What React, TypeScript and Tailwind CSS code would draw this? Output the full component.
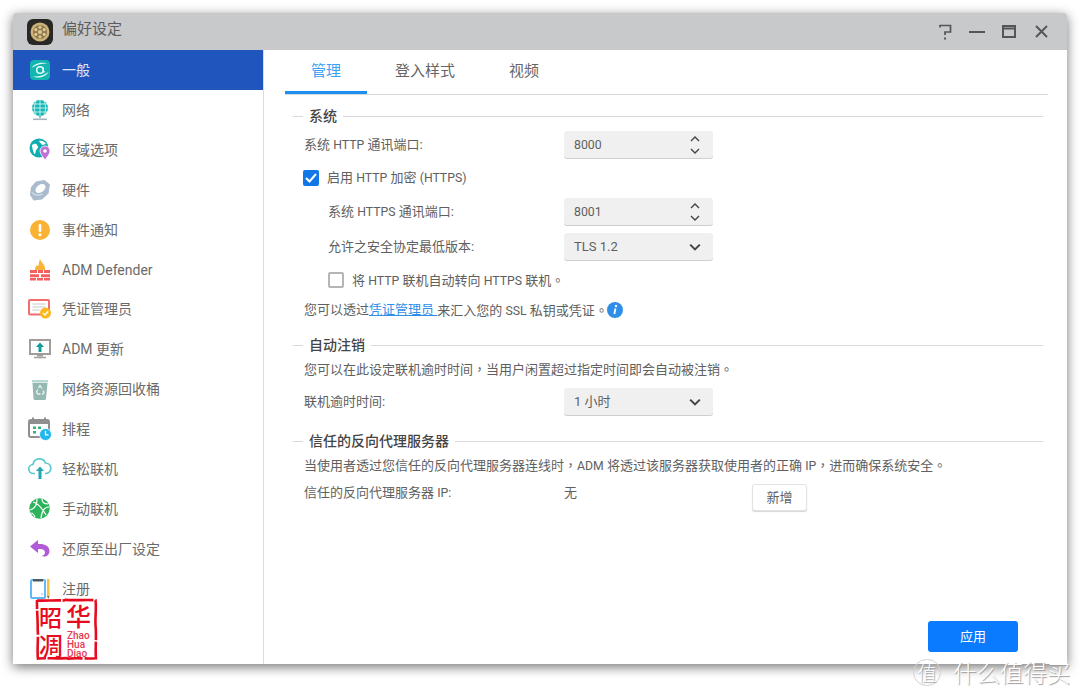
import { ReactNode } from "react";

const AppIcon = () => (
  <svg width="26" height="26" viewBox="0 0 26 26">
    <rect width="26" height="26" rx="6" fill="#2a2824" />
    <circle cx="13" cy="13" r="9.500" fill="#cdb27a" />
    <circle cx="13" cy="13" r="7" fill="#8d7850" />
    <circle cx="13" cy="13" r="2" fill="#e2c98f" />
    {[0, 60, 120, 180, 240, 300].map((a) => (
      <circle key={a} cx="13" cy="8.200" r="1.600" fill="#e2c98f" transform={`rotate(${a} 13 13)`} />
    ))}
  </svg>
);

const GeneralIcon = () => (
  <svg width="22" height="22" viewBox="0 0 22 22">
    <rect x="1" y="1" width="20" height="20" rx="4" fill="#12b5b0" />
    <path d="M2.500 9 C6 3.500 14 3 18.500 4.500 C13 4.300 7.500 5.500 2.500 9Z M19.500 13 C16 19 8 19.500 4 17.500 C9 18 15 16.500 19.500 13Z" fill="#e8fbfa" />
    <circle cx="11" cy="11" r="3.300" fill="none" stroke="#e8fbfa" strokeWidth="1.500" />
    <path d="M14.300 8.500v3.500c0 1 1 1 1.500.5" fill="none" stroke="#e8fbfa" strokeWidth="1.300" />
  </svg>
);

const NetworkIcon = () => (
  <svg width="22" height="22" viewBox="0 0 22 22">
    <circle cx="11" cy="9" r="8" fill="#14b8b4" />
    <path d="M3 9h16M4 5h14M4 13h14M11 1v16M7 2c-2 4-2 10 0 14M15 2c2 4 2 10 0 14" fill="none" stroke="#e6f8f7" strokeWidth="0.800" />
    <path d="M11 17v2" stroke="#9fb3bd" strokeWidth="2" />
    <path d="M4 20.300h14" stroke="#9fb3bd" strokeWidth="1.600" />
  </svg>
);

const RegionIcon = () => (
  <svg width="22" height="23" viewBox="0 0 22 23">
    <circle cx="10" cy="10" r="9.500" fill="#12adb0" />
    <path d="M3 7c2-1 4-2 5 0s2 2 0 4-1 4-2 5-3-6-3-9Z M10 3c3-1 6 1 7 3l-4 1c-1-2-2-2-3-4Z" fill="#fff" />
    <path d="M16 8a5 5 0 0 1 5 5c0 3-3 6-5 9-2-3-5-6-5-9a5 5 0 0 1 5-5Z" fill="#c26fd6" stroke="#fff" strokeWidth="0.800" />
    <circle cx="16" cy="13" r="1.800" fill="#fff" />
  </svg>
);

const HardwareIcon = () => (
  <svg width="22" height="22" viewBox="0 0 22 22">
    <path d="M7 2.500 15.500 1 21 5.500l-1.500 9-6.500 6-8.500 1L1 16l1-8Z" fill="#a9bbcd" />
    <ellipse cx="11.500" cy="9.500" rx="5.600" ry="3.700" transform="rotate(-35 11.500 9.500)" fill="#fff" />
    <path d="M3 13.500c2 3 7 3.500 10.500 1.500" fill="none" stroke="#d7dfe8" strokeWidth="1.300" />
  </svg>
);

const AlertIcon = () => (
  <svg width="20" height="20" viewBox="0 0 20 20">
    <circle cx="10" cy="10" r="10" fill="#f9b233" />
    <rect x="8.700" y="4" width="2.600" height="8" rx="1.200" fill="#fff" />
    <circle cx="10" cy="14.800" r="1.500" fill="#fff" />
  </svg>
);

const DefenderIcon = () => (
  <svg width="22" height="22" viewBox="0 0 22 22">
    <path d="M11 0c1 3 3 4 4 6s1 3 1 5H6c0-3 1-4 2-5 1 1 1 1 1.500 1C9.500 5 10 3 11 0Z" fill="#fbb43a" />
    <path d="M1 11h20v3H1ZM1 15.200h9v3H1ZM12 15.200h9v3h-9ZM1 19h20v2.500H1Z" fill="#f4605f" />
    <path d="M8 11h1v3H8ZM14 11h1v3h-1ZM7 19h1v3H7ZM14 19h1v3h-1Z" fill="#fff" />
  </svg>
);

const CertIcon = () => (
  <svg width="24" height="20" viewBox="0 0 24 20">
    <rect x="1" y="1" width="20" height="14.500" rx="1" fill="#fff" stroke="#f26d6d" strokeWidth="2" />
    <path d="M4.500 5h13M4.500 8h13M4.500 11h7" stroke="#c8c8c8" strokeWidth="1.200" />
    <circle cx="17.500" cy="14" r="5.500" fill="#fbb81f" />
    <path d="m15 14 2 2 3.200-3.800" fill="none" stroke="#fff" strokeWidth="1.400" />
  </svg>
);

const UpdateIcon = () => (
  <svg width="22" height="20" viewBox="0 0 22 20">
    <rect x="1" y="1" width="20" height="14" fill="#fff" stroke="#a19c98" strokeWidth="2" />
    <path d="M11 3.500 15 8h-2.500v5h-3V8H7Z" fill="#129c96" />
    <path d="M8 16h6v1.500H8Z" fill="#a19c98" />
    <path d="M5 18.500h12" stroke="#a19c98" strokeWidth="1.500" />
  </svg>
);

const RecycleIcon = () => (
  <svg width="18" height="21" viewBox="0 0 18 21">
    <path d="M1 1h16v2.500H1Z" fill="#b6d6d0" />
    <path d="M1.500 4h15l-1.500 15.500a1.500 1.500 0 0 1-1.500 1.500h-9.500a1.500 1.500 0 0 1-1.500-1.500Z" fill="#95b8b2" />
    <path d="m7.500 9 1.500-2.500 2 3M6.800 10.500 5.500 13l1.300 2h2.700M12 11.500l1 2-1 1.500h-1" fill="none" stroke="#e8f2f0" strokeWidth="1.300" />
  </svg>
);

const ScheduleIcon = () => (
  <svg width="24" height="24" viewBox="0 0 24 24">
    <rect x="1" y="3" width="20" height="17" rx="2" fill="#fff" stroke="#8f8f8f" strokeWidth="2" />
    <rect x="1" y="3" width="20" height="4" fill="#8f8f8f" />
    <path d="M5 0.500v4M17 0.500v4" stroke="#8f8f8f" strokeWidth="2" />
    <path d="M5 9.500h3v2.500H5ZM10 9.500h3v2.500h-3ZM5 14h3v2.500H5Z" fill="#2fb47c" />
    <circle cx="17.500" cy="17.500" r="6" fill="#1fb8f0" stroke="#fff" strokeWidth="0.800" />
    <path d="M17.500 14v3.800h3" fill="none" stroke="#fff" strokeWidth="1.300" />
  </svg>
);

const CloudIcon = () => (
  <svg width="24" height="22" viewBox="0 0 24 22">
    <path d="M7 15.500H5.500a4.500 4.500 0 0 1-.5-9A6.500 6.500 0 0 1 17.500 5a5.300 5.300 0 0 1 1 10.500H17" fill="none" stroke="#5bc8cf" strokeWidth="1.700" />
    <path d="M12 8.500 16 13h-2.500v8h-3v-8H8Z" fill="#23a8b0" />
  </svg>
);

const ManualIcon = () => (
  <svg width="21" height="21" viewBox="0 0 21 21">
    <circle cx="10.500" cy="10.500" r="10.200" fill="#2db35c" />
    <path d="M1 12c4-1 7-4 7-11M20 9c-4 0-7 3-8 11M4 4c4 1 9 6 13 13M13 1c0 3 2 5 6 5M2 15c2 0 3 2 4 4" fill="none" stroke="#fff" strokeWidth="1.200" />
  </svg>
);

const RestoreIcon = () => (
  <svg width="20" height="18" viewBox="0 0 20 18">
    <path d="M8 0 0 6.500 8 13V9c4-.5 7 .5 7 3.500 0 2-1.500 3-3.500 3.500 4 1.500 8-.5 8-5 0-5-5-7.500-11.500-7Z" fill="#b25bd6" />
  </svg>
);

const RegisterIcon = () => (
  <svg width="20" height="20" viewBox="0 0 20 20">
    <rect x="1" y="1" width="14" height="18" rx="1" fill="#fff" stroke="#62b8f5" strokeWidth="2" />
    <rect x="3" y="0" width="10" height="2.500" fill="#4d5a66" />
    <path d="M11 14h3l-3 3Z" fill="#cfd8de" />
    <rect x="17" y="0" width="2.500" height="17" fill="#f6c141" />
    <path d="M17 17h2.500l-1.200 3Z" fill="#7a6a4a" />
  </svg>
);

const navItems: { label: string; icon: ReactNode }[] = [
  { label: "一般", icon: <GeneralIcon /> },
  { label: "网络", icon: <NetworkIcon /> },
  { label: "区域选项", icon: <RegionIcon /> },
  { label: "硬件", icon: <HardwareIcon /> },
  { label: "事件通知", icon: <AlertIcon /> },
  { label: "ADM Defender", icon: <DefenderIcon /> },
  { label: "凭证管理员", icon: <CertIcon /> },
  { label: "ADM 更新", icon: <UpdateIcon /> },
  { label: "网络资源回收桶", icon: <RecycleIcon /> },
  { label: "排程", icon: <ScheduleIcon /> },
  { label: "轻松联机", icon: <CloudIcon /> },
  { label: "手动联机", icon: <ManualIcon /> },
  { label: "还原至出厂设定", icon: <RestoreIcon /> },
  { label: "注册", icon: <RegisterIcon /> },
];

// the screenshot's punctuation sits centred in its cell, as in the TC font
const Punct = ({ children }: { children: string }) => (
  <span className="font-['Noto_Sans_CJK_TC',sans-serif]">{children}</span>
);

// latin runs are a little narrower than Roboto at the CJK size
const Lat = ({ children }: { children: string }) => <span className="text-[12.250px]">{children}</span>;

const Chevron = ({ up = false, thick = false }: { up?: boolean; thick?: boolean }) => (
  <svg width={thick ? 12 : 10} height={thick ? 8 : 6} viewBox="0 0 10 6">
    <path d={up ? "M1 5 5 1l4 4" : "M1 1l4 4 4-4"} fill="none" stroke="#444" strokeWidth={thick ? 1.700 : 1.400} />
  </svg>
);

const Spin = ({ value }: { value: string }) => (
  <div className="flex h-[27px] w-[149px] items-center justify-between rounded-[3px] bg-[#f0f0f0] pl-[10px] pr-[13px] shadow-[0_1px_0_#cfcfcf]">
    <span className="pt-[1px] text-[12.250px]">{value}</span>
    <div className="flex flex-col gap-[6px]">
      <Chevron up />
      <Chevron />
    </div>
  </div>
);

const Select = ({ value }: { value: string }) => (
  <div className="flex h-[27px] w-[149px] items-center justify-between rounded-[3px] bg-[#f0f0f0] pl-[10px] pr-[12px] shadow-[0_1px_0_#cfcfcf]">
    <span className="pt-[1px]">{value}</span>
    <Chevron thick />
  </div>
);

const Section = ({ title }: { title: string }) => (
  <div className="ml-[8px] flex h-[20px] w-[750px] items-center">
    <div className="h-px w-[10px] bg-[#d8d8de]" />
    <span className="px-[6px] text-[14px] font-medium text-[#444]">{title}</span>
    <div className="h-px flex-1 bg-[#d8d8de]" />
  </div>
);

export default function App() {
  return (
    <div className="relative h-[697px] w-[1080px] overflow-hidden bg-white pl-[13px] pt-[13px] font-['Roboto','Noto_Sans_CJK_SC',sans-serif] text-[13px] text-[#606060]">
      <div className="flex h-[651px] w-[1054px] flex-col rounded-t-[3px] bg-white shadow-[0_3px_12px_rgba(0,0,0,0.55)]">
        <div className="flex h-[37px] shrink-0 items-center justify-between rounded-t-[3px] bg-[#c8c9cb] pl-[14px] pr-[19px]">
          <div className="flex items-center gap-[9px]">
            <AppIcon />
            <span className="pb-[5px] text-[15px] text-[#5c5c5c]">偏好设定</span>
          </div>
          <div className="flex items-center gap-[17px]">
            <svg width="13" height="16" viewBox="0 0 13 16">
              <path d="M1 3.500V1.500h10.500v6.500H6v3" fill="none" stroke="#555" strokeWidth="1.700" />
              <path d="M5 13.500h2V15.500H5Z" fill="#555" />
            </svg>
            <svg width="16" height="16" viewBox="0 0 16 16">
              <path d="M0 8h16" stroke="#555" strokeWidth="2" />
            </svg>
            <svg className="mr-[2px]" width="14" height="13" viewBox="0 0 14 13">
              <path d="M1 1h12v11H1Z M1 3.500h12" fill="none" stroke="#555" strokeWidth="2" />
            </svg>
            <svg width="13" height="13" viewBox="0 0 13 13">
              <path d="m1 1 11 11M12 1 1 12" stroke="#555" strokeWidth="1.900" />
            </svg>
          </div>
        </div>
        <div className="flex min-h-0 flex-1">
          <aside className="w-[251px] shrink-0 border-r border-[#dcdcdc]">
            {navItems.map((item, i) => (
              <div
                key={item.label}
                className={
                  i === 0
                    ? "flex h-[40px] items-center bg-[#1f55bd] text-[14px] text-[#dfe8f8]"
                    : "flex h-[39.9px] items-center text-[14px] text-[#6a6a6a]"
                }
              >
                <div className="flex w-[49px] shrink-0 justify-center pl-[4px]">{item.icon}</div>
                <span className="pt-[1px]">{item.label}</span>
              </div>
            ))}
          </aside>
          <main className="flex min-w-0 flex-1 flex-col pl-[21px]">
            <div className="flex h-[45px] w-[763px] shrink-0 border-b border-[#d8d8d8] text-[15px] text-[#666]">
              <div className="flex h-[44px] w-[82px] items-center justify-center border-b-[3px] border-[#1e90f0] pt-[1px] text-[#3ea0f2]">管理</div>
              <div className="flex h-[42px] w-[116px] items-center justify-center">登入样式</div>
              <div className="flex h-[42px] w-[82px] items-center justify-center">视频</div>
            </div>
            <div className="mt-[11px]"><Section title="系统" /></div>
            <div className="mt-[5px] flex items-center pl-[19px]">
              <span className="w-[260px]">系统 <Lat>HTTP</Lat> 通讯端口:</span>
              <Spin value="8000" />
            </div>
            <div className="mt-[12px] flex h-[16px] items-center gap-[8px] pl-[18px]">
              <div className="flex h-[16px] w-[16px] items-center justify-center rounded-[2px] bg-[#1277e6]">
                <svg width="12" height="10" viewBox="0 0 12 10">
                  <path d="m1 5 3.500 3.500L11 1" fill="none" stroke="#fff" strokeWidth="2" />
                </svg>
              </div>
              <span>启用 <Lat>HTTP</Lat> 加密 <Lat>(HTTPS)</Lat></span>
            </div>
            <div className="mt-[12px] flex items-center pl-[43px]">
              <span className="w-[236px]">系统 <Lat>HTTPS</Lat> 通讯端口:</span>
              <Spin value="8001" />
            </div>
            <div className="mt-[8px] flex items-center pl-[43px]">
              <span className="w-[236px]">允许之安全协定最低版本:</span>
              <Select value="TLS 1.2" />
            </div>
            <div className="mt-[12px] flex h-[16px] items-center gap-[8px] pl-[43px]">
              <div className="h-[16px] w-[16px] rounded-[2px] border-2 border-[#b5b5b5] bg-white" />
              <span>将 <Lat>HTTP</Lat> 联机自动转向 <Lat>HTTPS</Lat> 联机<Punct>。</Punct></span>
            </div>
            <div className="mt-[12px] flex h-[20px] items-center whitespace-pre pl-[19px]">
              <span>您可以透过</span>
              <span className="text-[#2f8fe8] underline">凭证管理员 </span>
              <span>来汇入您的 <Lat>SSL</Lat> 私钥或凭证<Punct>。</Punct></span>
              <svg className="-ml-[1px]" width="16" height="16" viewBox="0 0 16 16">
                <circle cx="8" cy="8" r="8" fill="#2f8fe8" />
                <circle cx="9" cy="4" r="1.200" fill="#fff" />
                <path d="M8.500 6.500 7.300 12" stroke="#fff" strokeWidth="1.800" />
              </svg>
            </div>
            <div className="mt-[15px]"><Section title="自动注销" /></div>
            <div className="mt-[4px] flex h-[20px] items-center whitespace-pre pl-[19px]">
              <span>您可以在此设定联机逾时时间<Punct>，</Punct>当用户闲置超过指定时间即会自动被注销<Punct>。</Punct></span>
            </div>
            <div className="mt-[9px] flex items-center pl-[19px]">
              <span className="w-[260px]">联机逾时时间:</span>
              <Select value="1 小时" />
            </div>
            <div className="mt-[16px]"><Section title="信任的反向代理服务器" /></div>
            <div className="mt-[4px] flex h-[20px] items-center whitespace-pre pl-[19px]">
              <span>当使用者透过您信任的反向代理服务器连线时<Punct>，</Punct><Lat>ADM</Lat> 将透过该服务器获取使用者的正确 <Lat>IP</Lat><Punct>，</Punct>进而确保系统安全<Punct>。</Punct></span>
            </div>
            <div className="mt-[8px] flex items-center pl-[19px]">
              <span className="mb-[10px] w-[260px]">信任的反向代理服务器 <Lat>IP:</Lat></span>
              <span className="mb-[10px] w-[188px]">无</span>
              <button className="h-[27px] w-[55px] rounded-[3px] border border-[#e2e2e2] bg-white text-[#606060] shadow-[0_1px_1px_#d5d5d5]">新增</button>
            </div>
            <div className="mt-auto flex justify-end pb-[12px] pr-[49px]">
              <button className="h-[31px] w-[90px] rounded-[3px] bg-[#0a7bff] text-[13px] text-white">应用</button>
            </div>
          </main>
        </div>
      </div>

      {/* seal stamp over the sidebar */}
      <div className="absolute left-[34px] top-[598px] h-[64px] w-[65px] font-['Noto_Sans_CJK_SC',sans-serif] font-medium text-[#e60b1e]">
        <svg className="absolute inset-0" width="65" height="64" viewBox="0 0 65 64">
          <path
            d="M3 2.500c8 .6 18-.6 27 0l1.500-.6c10 .8 20-.4 30 .3 1.200 9-.8 18 .2 27 .8 11-.5 20 .2 31-9 .8-19-.5-28 .4l-2-.5c-9 .8-20-.4-28 .4-1-10 .6-19-.2-29 .2-10-1-20 -.7-29.500Z"
            fill="none"
            stroke="#e60b1e"
            strokeWidth="2.600"
            strokeDasharray="24 1.500 31 2 40 1.500 28 2 35 1.500 30 2"
          />
        </svg>
        <span className="absolute left-[5px] top-[5px] text-[23px] leading-[26px]">昭</span>
        <span className="absolute left-[32px] top-[3px] text-[25px] leading-[28px]">华</span>
        <span className="absolute left-[5px] top-[33px] text-[24px] leading-[28px]">凋</span>
        <div className="absolute left-[33px] top-[33px] font-['Roboto',sans-serif] text-[10px] leading-[9px] text-[#e8394f]">
          <div>Zhao</div>
          <div>Hua</div>
          <div>Diao</div>
        </div>
      </div>

      {/* site watermark */}
      <div className="absolute left-[913px] top-[658px] flex items-center gap-[12px] font-['Noto_Sans_CJK_SC',sans-serif] font-light text-white [text-shadow:1px_1px_1px_#9a9a9a]">
        <div className="flex h-[27px] w-[28px] items-center justify-center rounded-full border border-[#d2d2d2] text-[19px] leading-none">值</div>
        <span className="text-[23.500px] leading-[28px]">什么值得买</span>
      </div>
    </div>
  );
}
